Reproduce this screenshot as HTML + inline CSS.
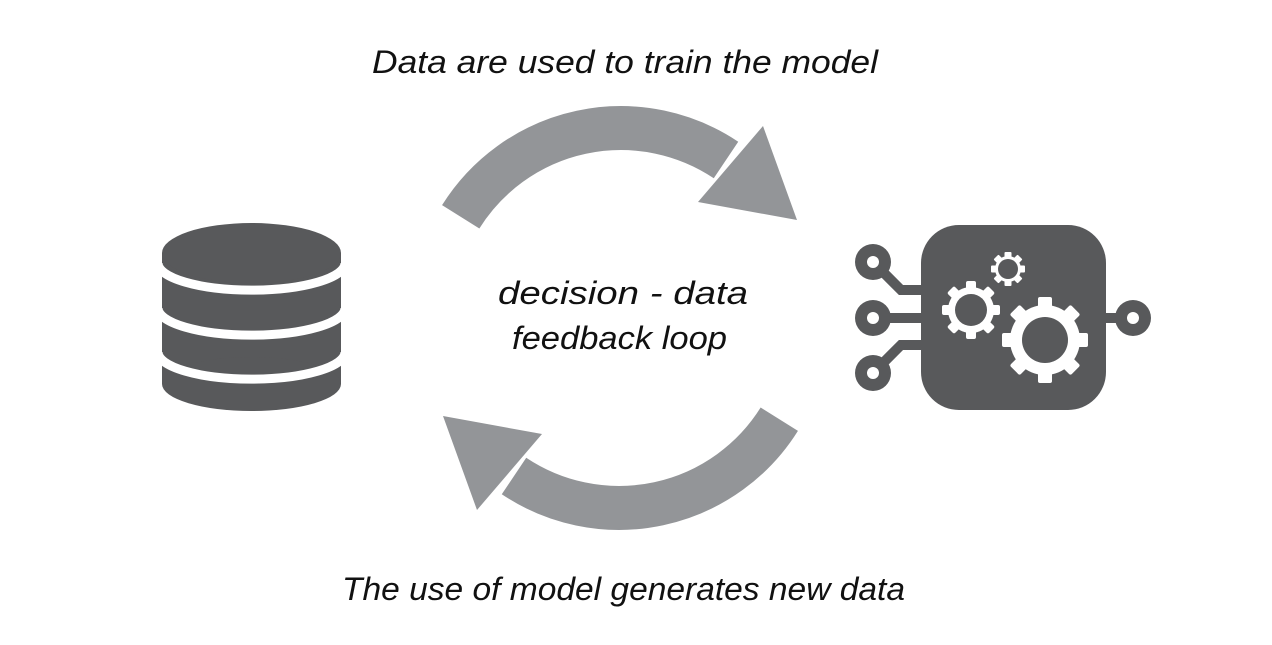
<!DOCTYPE html>
<html><head><style>
html,body{margin:0;padding:0;background:#fff;width:1272px;height:645px;overflow:hidden}
svg{display:block}
text{font-family:"Liberation Sans",sans-serif;font-style:italic;fill:#111}
</style></head><body>
<svg width="1272" height="645" viewBox="0 0 1272 645" xmlns="http://www.w3.org/2000/svg">
<defs>
<g id="arrow">
<path d="M460.7 216.8 A189 189 0 0 1 726 160" fill="none" stroke="#939598" stroke-width="44"/>
<polygon points="763,126 797,220 698,202" fill="#939598"/>
</g>
</defs>
<use href="#arrow"/>
<use href="#arrow" transform="rotate(180 620 318)"/>

<g fill="#58595b">
<rect x="162" y="253" width="179" height="131"/>
<ellipse cx="251.5" cy="384" rx="89.5" ry="27"/>
</g>
<g fill="none" stroke="#fff" stroke-width="9">
<path d="M158 263 A93 27 0 0 0 345 263"/>
<path d="M158 308 A93 27 0 0 0 345 308"/>
<path d="M158 352 A93 27 0 0 0 345 352"/>
</g>
<ellipse cx="251.5" cy="253" rx="89.5" ry="30" fill="#58595b"/>

<g fill="#58595b" stroke="#58595b">
<rect x="921" y="225" width="185" height="185" rx="38" stroke="none"/>
<path d="M873 262 L901 290 L925 290" fill="none" stroke-width="10"/>
<path d="M873 318 L925 318" fill="none" stroke-width="10"/>
<path d="M873 373 L901 345 L925 345" fill="none" stroke-width="10"/>
<path d="M1100 318 L1133 318" fill="none" stroke-width="10"/>
<circle cx="873" cy="262" r="18" stroke="none"/>
<circle cx="873" cy="318" r="18" stroke="none"/>
<circle cx="873" cy="373" r="18" stroke="none"/>
<circle cx="1133" cy="318" r="18" stroke="none"/>
</g>
<g fill="#fff">
<circle cx="873" cy="262" r="6"/><circle cx="873" cy="318" r="6"/><circle cx="873" cy="373" r="6"/><circle cx="1133" cy="318" r="6"/>
</g>
<g fill="#fff">
<g transform="translate(1045 340)">
<circle r="35"/>
<g id="t8"><rect x="-7" y="-43" width="14" height="14" rx="2"/></g>
<use href="#t8" transform="rotate(45)"/><use href="#t8" transform="rotate(90)"/><use href="#t8" transform="rotate(135)"/>
<use href="#t8" transform="rotate(180)"/><use href="#t8" transform="rotate(225)"/><use href="#t8" transform="rotate(270)"/><use href="#t8" transform="rotate(315)"/>
<circle r="23" fill="#58595b"/>
</g>
<g transform="translate(971 310)">
<circle r="23"/>
<g id="t7"><rect x="-5" y="-29" width="10" height="10" rx="2"/></g>
<use href="#t7" transform="rotate(45)"/><use href="#t7" transform="rotate(90)"/><use href="#t7" transform="rotate(135)"/>
<use href="#t7" transform="rotate(180)"/><use href="#t7" transform="rotate(225)"/><use href="#t7" transform="rotate(270)"/><use href="#t7" transform="rotate(315)"/>
<circle r="16" fill="#58595b"/>
</g>
<g transform="translate(1008 269)">
<circle r="13"/>
<g id="t6"><rect x="-3.5" y="-17" width="7" height="7" rx="1"/></g>
<use href="#t6" transform="rotate(45)"/><use href="#t6" transform="rotate(90)"/><use href="#t6" transform="rotate(135)"/>
<use href="#t6" transform="rotate(180)"/><use href="#t6" transform="rotate(225)"/><use href="#t6" transform="rotate(270)"/><use href="#t6" transform="rotate(315)"/>
<circle r="10" fill="#58595b"/>
</g>
</g>

<text x="372" y="73" font-size="32" textLength="506" lengthAdjust="spacingAndGlyphs">Data are used to train the model</text>
<text x="498" y="304" font-size="32" textLength="250" lengthAdjust="spacingAndGlyphs">decision - data</text>
<text x="512" y="349" font-size="32" textLength="215" lengthAdjust="spacingAndGlyphs">feedback loop</text>
<text x="342" y="600" font-size="32" textLength="563" lengthAdjust="spacingAndGlyphs">The use of model generates new data</text>
</svg>
</body></html>
